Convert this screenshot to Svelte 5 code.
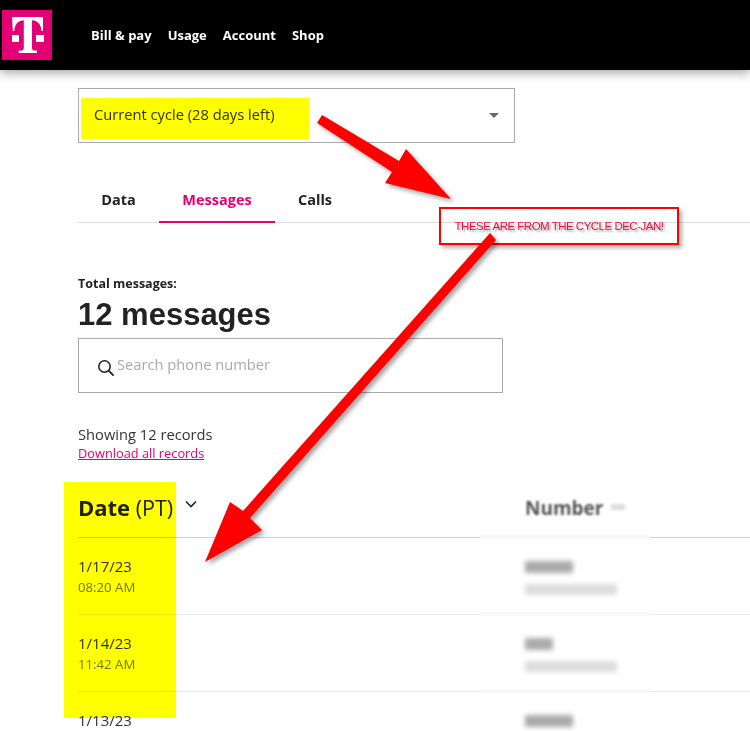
<script>
	const nav = ['Bill & pay', 'Usage', 'Account', 'Shop'];
	const tabs = ['Data', 'Messages', 'Calls'];
	const rows = [
		{ date: '1/17/23', time: '08:20 AM', w: 48 },
		{ date: '1/14/23', time: '11:42 AM', w: 28 },
		{ date: '1/13/23', time: '', w: 48 }
	];
</script>

<div class="page">
	<header>
		<div class="logo">
			<svg viewBox="0 0 50 50" width="50" height="50">
				<rect width="50" height="50" fill="#e20074" />
				<path fill="#fff" d="M10 7h31v14h-1.600c-.2-6-3-10.600-9.400-10.800v27.300c0 2.500 1 3 3.200 3.100h1.800V43H16.800v-2.400h1.800c2.200-.1 3.200-.6 3.200-3.100V10.200c-6.400.2-9.200 4.800-9.400 10.800H10.800z" />
				<rect x="10" y="25" width="7" height="7" fill="#fff" />
				<rect x="34" y="25" width="8" height="7" fill="#fff" />
			</svg>
		</div>
		<nav>
			{#each nav as item}
				<span>{item}</span>
			{/each}
		</nav>
	</header>

	<main>
		<div class="select">
			<span>Current cycle (28 days left)</span>
			<i class="caret"></i>
		</div>

		<div class="tabs">
			{#each tabs as tab}
				<div class="tab" class:active={tab === 'Messages'}>{tab}</div>
			{/each}
		</div>

		<div class="total-label">Total messages:</div>
		<h1>12 messages</h1>

		<div class="search">
			<svg viewBox="0 0 18 18" width="18" height="18">
				<circle cx="7.500" cy="7.500" r="5.700" fill="none" stroke="#222" stroke-width="1.600" />
				<path d="M11.600 11.600l5 5" stroke="#222" stroke-width="1.800" fill="none" />
			</svg>
			<span>Search phone number</span>
		</div>

		<div class="showing">Showing 12 records</div>
		<a class="download" href="#top">Download all records</a>

		<div class="table-head">
			<div class="date-col">
				<b>Date</b> (PT)
				<svg viewBox="0 0 12 8" width="12" height="8">
					<path d="M1 1.500l5 5 5-5" fill="none" stroke="#222" stroke-width="1.600" />
				</svg>
			</div>
			<div class="number-col"><b>Number</b><i></i></div>
		</div>

		{#each rows as row}
			<div class="row">
				<div class="date-col">
					<div class="date">{row.date}</div>
					<div class="time">{row.time}</div>
				</div>
				<div class="number-col">
					<div class="bar dark" style="width: {row.w}px"></div>
					{#if row.time}
						<div class="bar light"></div>
					{/if}
				</div>
			</div>
		{/each}
	</main>

	<!-- annotations drawn on top of the screenshot -->
	<div class="hl hl-cycle"></div>
	<div class="hl hl-date"></div>
	<div class="callout">THESE ARE FROM THE CYCLE DEC-JAN!</div>
	<svg class="arrows" viewBox="0 0 750 731" width="750" height="731">
		<path fill="#f00" d="M322 115L399 161L406 149L451 199L385 183L392 172L317 123z" />
		<path fill="#f00" d="M490 233L496 240L250 518L262 530L205 562L230 502L243 511z" />
	</svg>
</div>

<style>
	:global(body) {
		margin: 0;
		background: #fff;
	}

	.page {
		position: relative;
		width: 750px;
		height: 731px;
		overflow: hidden;
		font-family: "Open Sans", sans-serif;
		color: #222;
	}

	header {
		display: flex;
		align-items: center;
		height: 70px;
		background: #000;
		box-shadow: 0 3px 10px rgba(0, 0, 0, 0.35);
		padding-left: 2px;
	}

	.logo {
		height: 50px;
	}

	nav {
		display: flex;
		gap: 16px;
		margin-left: 39px;
		color: #fff;
		font-size: 13px;
		font-weight: 700;
	}

	main {
		padding: 18px 0 0 78px;
	}

	.select {
		display: flex;
		align-items: center;
		justify-content: space-between;
		box-sizing: border-box;
		width: 437px;
		height: 55px;
		padding: 0 15px;
		border: 1px solid #aaa;
		font-size: 14.700px;
		color: #333;
	}

	.select span {
		margin-bottom: 3px;
	}

	.caret {
		border: 5px solid transparent;
		border-top-color: #666;
		border-bottom: 0;
	}

	.tabs {
		display: flex;
		height: 80px;
		box-sizing: border-box;
		padding-top: 47px;
		border-bottom: 1px solid #ddd;
		font-size: 14.500px;
		font-weight: 700;
	}

	.tab {
		width: 81px;
		text-align: center;
		line-height: 20px;
	}

	.tab.active {
		width: 116px;
		height: 33px;
		box-sizing: border-box;
		color: #e20074;
		border-bottom: 2px solid #e20074;
	}

	.tab:last-child {
		width: 80px;
	}

	.total-label {
		margin-top: 53px;
		font-size: 12.500px;
		font-weight: 700;
		line-height: 16px;
	}

	h1 {
		margin: 5px 0 0;
		font: 700 31px/36px "Liberation Sans", sans-serif;
	}

	.search {
		display: flex;
		align-items: center;
		gap: 2px;
		box-sizing: border-box;
		width: 425px;
		height: 55px;
		margin-top: 5px;
		padding: 0 18px;
		border: 1px solid #aaa;
		font-size: 14.700px;
		color: #aaa;
	}

	.search svg {
		margin-top: 5px;
	}

	.search span {
		margin-bottom: 3px;
	}

	.showing {
		margin-top: 31px;
		font-size: 14.700px;
		line-height: 20px;
		color: #333;
	}

	.download {
		display: block;
		font-size: 12.800px;
		line-height: 18px;
		color: #e20074;
	}

	.table-head {
		display: flex;
		box-sizing: border-box;
		height: 76px;
		padding-top: 31px;
		border-bottom: 1px solid #ccc;
		position: relative;
	}

	.table-head .date-col {
		font-size: 21.500px;
		line-height: 28px;
		white-space: nowrap;
	}

	.table-head b {
		font-size: 22px;
	}

	.table-head svg {
		margin: 0 0 8px 6px;
	}

	.date-col {
		width: 447px;
	}

	.number-col b {
		display: inline-block;
		margin-top: 2px;
		font-size: 19px;
		color: #555;
		filter: blur(1.200px);
	}

	.number-col i {
		display: inline-block;
		width: 14px;
		height: 6px;
		margin: 0 0 5px 8px;
		background: #ddd;
		filter: blur(1.500px);
	}

	.row {
		display: flex;
		position: relative;
		box-sizing: border-box;
		height: 77px;
		padding-top: 18px;
		border-bottom: 1px solid #e8e8e8;
	}

	.table-head::after,
	.row::after {
		content: '';
		position: absolute;
		left: 402px;
		bottom: -2px;
		width: 170px;
		height: 4px;
		background: #f8f8f8;
	}

	.date {
		font-size: 15px;
		line-height: 20px;
		color: #333;
	}

	.time {
		margin-top: 1px;
		font-size: 13.200px;
		line-height: 20px;
		color: #777;
	}

	.bar {
		filter: blur(2.500px);
	}

	.bar.dark {
		height: 12px;
		margin-top: 5px;
		background: #aaa;
	}

	.bar.light {
		width: 92px;
		height: 11px;
		margin-top: 11px;
		background: #ddd;
	}

	.hl {
		position: absolute;
		background: #ff0;
		mix-blend-mode: multiply;
	}

	.hl-cycle {
		left: 81px;
		top: 98px;
		width: 228px;
		height: 41px;
	}

	.hl-date {
		left: 64px;
		top: 482px;
		width: 112px;
		height: 236px;
	}

	.callout {
		position: absolute;
		left: 439px;
		top: 207px;
		box-sizing: border-box;
		width: 240px;
		height: 38px;
		border: 2px solid #f00;
		box-shadow: 3px 3px 4px rgba(0, 0, 0, 0.3);
		font: 11.500px/34px "Liberation Sans", sans-serif;
		letter-spacing: -0.500px;
		text-align: center;
		color: #e8103c;
		text-shadow: 2px 2px 2px rgba(0, 0, 0, 0.35);
	}

	.arrows {
		position: absolute;
		left: 0;
		top: 0;
		filter: drop-shadow(3px 3px 2px rgba(0, 0, 0, 0.35));
	}
</style>
